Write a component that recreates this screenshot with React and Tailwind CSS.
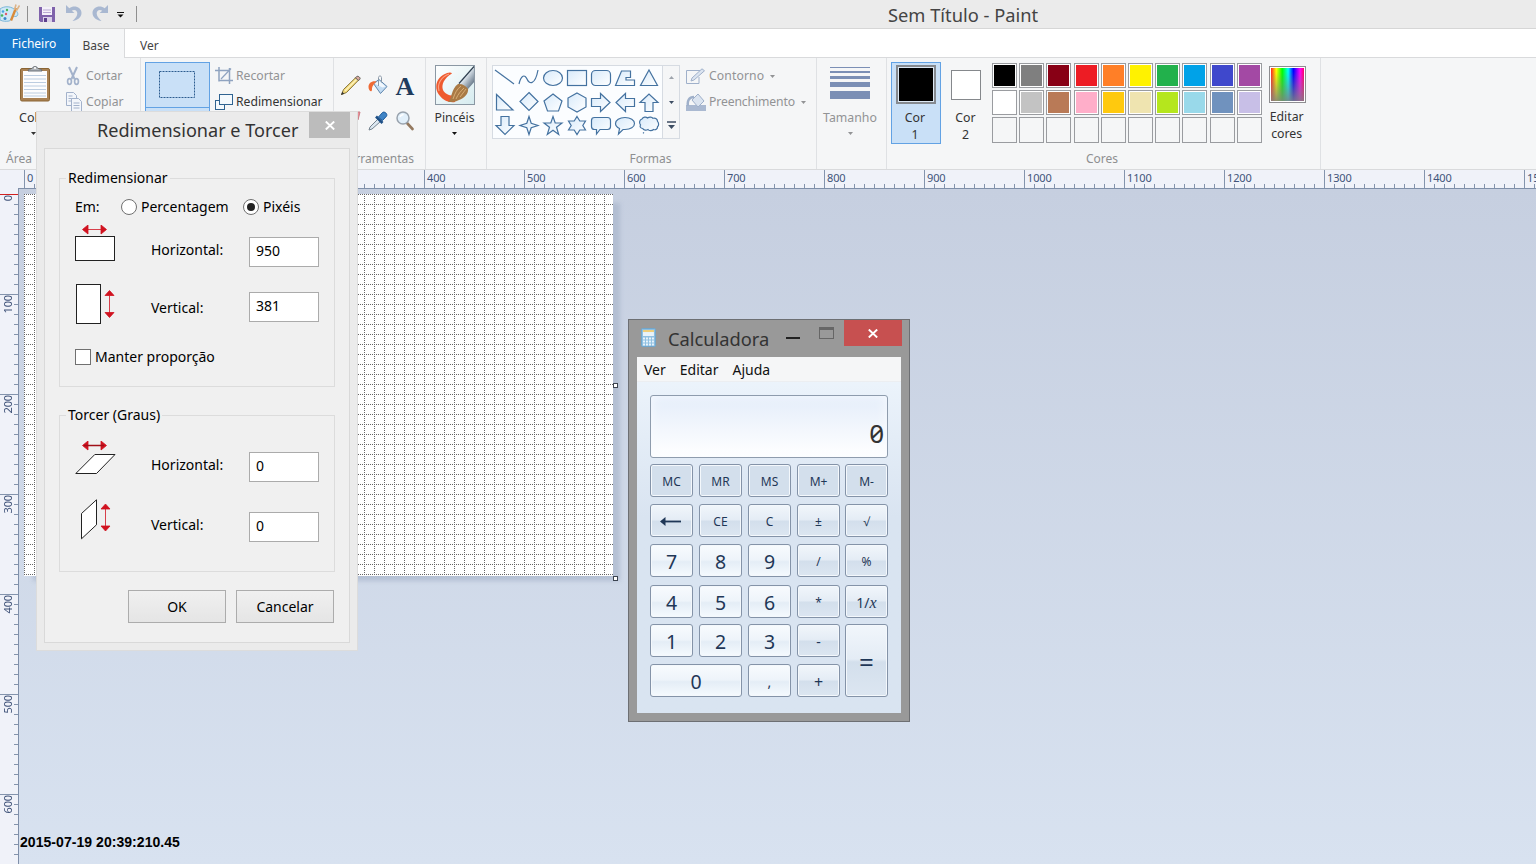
import React from "react";

const range = (n) => Array.from({ length: n }, (_, i) => i);

/* ---------- small icons ---------- */

function PaintLogo() {
  return (
    <svg width="20" height="20" viewBox="0 0 20 20" className="shrink-0">
      <path d="M0 5C4 2 10 2 14 5c3 2 5 5 3 7-1 1-4 0-5 1s0 3-3 4c-3 .5-6 .5-9-1z" fill="#cfe8f6" stroke="#6fb0d6" strokeWidth=".9" />
      <circle cx="3" cy="7.500" r="1.300" fill="#4aa3df" />
      <circle cx="7" cy="6" r="1.200" fill="#49b35a" />
      <circle cx="2" cy="11.500" r="1.300" fill="#49b35a" />
      <circle cx="6" cy="10" r="1.200" fill="#e05a6a" />
      <circle cx="5" cy="14.500" r="1.500" fill="#3b87c8" />
      <path d="M11 16.500 16 4" stroke="#d98b3a" strokeWidth="2.400" />
      <path d="M14.500 6 16 .5M16.500 6.500 19.500 1.500" stroke="#dcb48a" strokeWidth="1.600" />
    </svg>
  );
}

function SaveIcon() {
  return (
    <svg width="16" height="16" viewBox="0 0 16 16">
      <path d="M0 0h16v15H1.500L0 13.500z" fill="#7f62ab" />
      <rect x="3" y="0" width="10" height="8" fill="#f4f1f9" />
      <path d="M4 3h8M4 5.500h8" stroke="#b9a9d3" />
      <rect x="4" y="10" width="9" height="5" fill="#d9d0e8" />
      <rect x="5" y="11" width="3" height="4" fill="#5d3f8c" />
    </svg>
  );
}

function UndoIcon({ flip }) {
  return (
    <svg width="18" height="19" viewBox="0 0 18 19" className={flip ? "-scale-x-100" : ""}>
      <path d="M1 1v8h8.500L6.800 6.800C9.500 5 12.500 6.500 12.300 9.800 12 13 9.500 15 7.500 17c4-.5 9-3 9-8C16.500 3 9 .5 4.300 4.300z" fill="#a9b8d1" />
    </svg>
  );
}

function Caret({ className = "" }) {
  return (
    <svg width="5" height="3" viewBox="0 0 5 3" className={"shrink-0 " + className}>
      <path d="M0 0h5L2.500 3z" fill="currentColor" />
    </svg>
  );
}

function ClipboardIcon() {
  return (
    <svg width="32" height="38" viewBox="0 0 32 38">
      <rect x="1.500" y="3.500" width="29" height="32.500" rx="1.500" fill="#a98153" stroke="#8b6534" />
      <rect x="4" y="6" width="24" height="27" fill="#fdfdfd" />
      <path d="M5 10.500h22M5 14h22M5 17.500h22M5 21h22M5 24.500h22M5 28h22M5 31h22" stroke="#bccde0" strokeWidth="1" />
      <path d="M9 6c0-2.500 3-1.500 4.500-3 1-2 4-2 5 0C20 4.500 23 3.500 23 6z" fill="#aeb3b8" stroke="#5f656c" strokeWidth=".9" />
      <circle cx="16" cy="3" r="1" fill="#fff" />
    </svg>
  );
}

function ScissorsIcon() {
  return (
    <svg width="14" height="20" viewBox="0 0 14 20" fill="none" stroke="#a3b2cb">
      <path d="M3 1 8.500 13M11 1 5.500 13" strokeWidth="2" />
      <ellipse cx="3.500" cy="15.500" rx="1.900" ry="2.800" strokeWidth="1.700" />
      <ellipse cx="10.500" cy="15.500" rx="1.900" ry="2.800" strokeWidth="1.700" />
    </svg>
  );
}

function CopyIcon() {
  return (
    <svg width="17" height="20" viewBox="0 0 17 20" fill="#f3f6fb" stroke="#a3b2cb">
      <path d="M.5.5h7l3 3v10H.5z" />
      <path d="M2.500 4h4M2.500 6.500h5M2.500 9h5" />
      <path d="M5.500 6.500h7l3 3v10h-10z" />
      <path d="M7.500 11h6M7.500 13.500h6M7.500 16h6" />
    </svg>
  );
}

function CropIcon() {
  return (
    <svg width="18" height="18" viewBox="0 0 18 18" fill="none" stroke="#8fa3c0">
      <path d="M4 0v14.500M0 3.500h14.500M14.500 1v16M4 13.500h14" strokeWidth="1.500" />
      <path d="M6 12 16 1.500" strokeWidth="1.200" />
    </svg>
  );
}

function ResizeIcon() {
  return (
    <svg width="18" height="16" viewBox="0 0 18 16" fill="#f4f9fd" stroke="#2f6391">
      <rect x=".5" y="6.500" width="9" height="9" />
      <rect x="4.500" y=".5" width="13" height="10" />
    </svg>
  );
}

function PencilIcon() {
  return (
    <svg width="22" height="22" viewBox="0 0 22 22">
      <path d="M1.500 20.500 3.500 15.500 15.500 3.800 18.200 6.500 6.500 18.500z" fill="#f2d878" stroke="#86743a" />
      <path d="M5 17 17 5" stroke="#fdf3bd" strokeWidth="1.400" />
      <path d="m15.500 3.800 1.200-1.300c1.500-1 4.500 1.500 3 3l-1.500 1z" fill="#d9a9a0" stroke="#5f5a52" />
      <path d="M1 21 2.300 17.800 4.200 19.700z" fill="#333" />
    </svg>
  );
}

function BucketIcon() {
  return (
    <svg width="20" height="20" viewBox="0 0 20 20">
      <path d="m5.500 8.500 5.500-4 8 7-6.500 7z" fill="#c3dcf3" stroke="#5f86ad" />
      <path d="m7 8.700 4-3 6.500 5.800-3 1z" fill="#f2f8fd" />
      <path d="M10.500 11V2.500c0-2 3-2 3 0v5" fill="none" stroke="#8a99a8" />
      <path d="M8.500 6.500C4 5.500.5 8 .5 12c0 4 3.500 6 3.500 2.500C4 11.500 5 10 8.500 6.500z" fill="#ee6a35" />
    </svg>
  );
}

function PickerIcon() {
  return (
    <svg width="20" height="20" viewBox="0 0 20 20">
      <path d="m1 19 1-3L10 8l2.500 2.500L4 18z" fill="#dce7f0" stroke="#75838f" />
      <path d="M8 5.500 14.500 12" stroke="#1d4f86" strokeWidth="2.600" />
      <path d="m10.500 6 4-4.500C16.500 0 20 3 18.500 5.200L14.500 9.500z" fill="#3f84c6" stroke="#1d5a9a" />
    </svg>
  );
}

function MagnifierIcon() {
  return (
    <svg width="18" height="20" viewBox="0 0 18 20">
      <path d="m11 12 5.500 6" stroke="#94795f" strokeWidth="2.600" strokeLinecap="round" />
      <circle cx="7" cy="7" r="6" fill="#e2f0fb" stroke="#99a3ae" strokeWidth="1.500" />
      <path d="M4 6c.5-1.500 2-2.500 3.500-2.300" stroke="#fff" strokeWidth="1.500" fill="none" />
    </svg>
  );
}

function BrushIcon() {
  return (
    <svg width="40" height="40" viewBox="0 0 40 40">
      <defs>
        <linearGradient id="ferrule" x1="0" y1="0" x2="1" y2="1">
          <stop offset="0" stopColor="#55697f" />
          <stop offset=".4" stopColor="#e6eef5" />
          <stop offset="1" stopColor="#33475c" />
        </linearGradient>
        <linearGradient id="paper" x1="0" y1="0" x2="1" y2="1">
          <stop offset="0" stopColor="#ffffff" />
          <stop offset="1" stopColor="#d5ebef" />
        </linearGradient>
      </defs>
      <rect width="40" height="40" fill="url(#paper)" />
      <path d="M17 8.500C15.500 6 7 9 3 15 0 20 1 27 5 31c3 4 9 7 15 6l2-7c-6 2-12-1-14-5-2-5 1-12 9-16.500z" fill="#ee5a2e" />
      <path d="M14 9C6 12 2 19 4 26" fill="none" stroke="#f9a184" strokeWidth="1.200" />
      <path d="M13 37c4-3 3-13 10-18l5-1 5 5c1 6-4 10-9 12-4 2-7 2-11 2z" fill="#a97a45" />
      <path d="M18 34c2-6 4-10 8-13M21 34c2-5 5-8 8-11M25 32c2-3 4-5 6-8" stroke="#dcb37c" strokeWidth=".9" fill="none" />
      <path d="M24 19 40 2v14l-7 8c-2-3-5-5-9-5z" fill="url(#ferrule)" />
      <path d="M24 18.500 39 1.500" stroke="#2e3d4e" strokeWidth="1.200" />
      <rect x=".5" y=".5" width="39" height="39" fill="none" stroke="#8b98a4" />
    </svg>
  );
}

const SHAPES = [
  <path key="s" d="M2 4 21 18" />,
  <path key="s" d="M2 18C4 9 8 8 10 13s8 7 11-9" fill="none" />,
  <ellipse key="s" cx="12" cy="12" rx="9.500" ry="7.500" />,
  <rect key="s" x="2.500" y="4.500" width="19" height="15" />,
  <rect key="s" x="2.500" y="4.500" width="19" height="15" rx="4" />,
  <path key="s" d="M2.500 19.500 8.500 5H17.500v6.500h-4.500v2.500H21.500v5.500z" />,
  <path key="s" d="M12 4 20.500 19.500h-17z" />,
  <path key="s" d="M3.500 4.500v15.500h16.500z" />,
  <path key="s" d="M12 2.500 21 11.500 12 20.500 3 11.500z" />,
  <path key="s" d="M12 4 21 11 17.500 21h-11L3 11z" />,
  <path key="s" d="M12 3 21 8v9l-9 5-9-5V8z" />,
  <path key="s" d="M2.500 8.500h9v-5l9.500 9-9.500 9v-5h-9z" />,
  <path key="s" d="M21.500 8.500h-9v-5L3 12.500l9.500 9v-5h9z" />,
  <path key="s" d="M8 21.500v-9H3L12 4l9 8.500h-5v9z" />,
  <path key="s" d="M8 2.500v9H3l9 9 9-9h-5v-9z" />,
  <path key="s" d="M12 2.500 14.200 9.300 21 11.500 14.200 13.700 12 20.500 9.800 13.700 3 11.500 9.800 9.300z" />,
  <path key="s" d="M12 2.500 14.200 9H21l-5.500 4.300 2.200 7.200-5.700-4.300L6.300 20.500l2.200-7.200L3 9h6.800z" />,
  <path key="s" d="M12 2.500 14.800 7H20.500L17.800 11.500l2.700 4.500h-5.700L12 20.500 9.200 16H3.500L6.200 11.500 3.500 7h5.700z" />,
  <path key="s" d="M5.500 3.500h13q3 0 3 3v6q0 3-3 3H11l-3.500 4.500v-4.500h-2q-3 0-3-3v-6q0-3 3-3z" />,
  <path key="s" d="M12 3.500c5.500 0 9.500 2.500 9.500 6s-4 6-9.500 6c-1 0-1.500 0-2 0l-4.500 4.500 1-5.500C4 13.300 2.500 11.500 2.500 9.500c0-3.500 4-6 9.500-6z" />,
  <path key="s" d="M5 5c1-2 4-2.500 5.500-1 2-1.500 4.500-1 5.500.3 2.500-.8 4.500.8 4.500 3 1.500 1.500 1.500 4.200 0 5.500.2 2-2 3.500-4 2.700-1.500 1.500-4.500 1.500-5.500 0-1.500 1-4.500 1-5.300-1C3.500 14.500 2.500 12.500 3.500 11 1.800 9 2.500 5.500 5 5zM6 18.500l1 .8" />,
];

/* ---------- ribbon ---------- */

function GroupLabel({ children, className = "" }) {
  return <div className={"mt-[2px] whitespace-nowrap text-center text-[12px] leading-[16px] text-[#8e8f91] " + className}>{children}</div>;
}

function TitleBar() {
  return (
    <header className="flex h-[29px] shrink-0 border-b border-[#d6d6d6] bg-[#ebebeb]">
      <div className="flex w-[390px] items-start pt-[4px]">
        <PaintLogo />
        <span className="ml-[7px] mt-[2px] h-[16px] w-px bg-[#8f8f8f]" />
        <span className="ml-[11px] mt-[3px]"><SaveIcon /></span>
        <span className="ml-[10px]"><UndoIcon /></span>
        <span className="ml-[8px]"><UndoIcon flip /></span>
        <svg width="7" height="6" viewBox="0 0 7 6" className="ml-[8px] mt-[8px]">
          <path d="M0 .5h7" stroke="#111" />
          <path d="M.5 2.500h6l-3 3z" fill="#111" />
        </svg>
        <span className="ml-[12px] mt-[2px] h-[16px] w-px bg-[#8f8f8f]" />
      </div>
      <h1 className="w-[1146px] pl-[498px] pt-[4px] text-[18.300px] leading-[22px] text-[#444]">Sem Título - Paint</h1>
    </header>
  );
}

function Tabs() {
  return (
    <nav className="flex h-[29px] shrink-0 bg-white text-[12px] leading-[16px] text-[#444]">
      <div className="w-[70px] bg-[#1979ca] pr-[2px] pt-[7px] text-center text-white">Ficheiro</div>
      <div className="w-[55px] border-r border-[#d9dadc] bg-[#f5f6f7] pr-[2px] pt-[9px] text-center">Base</div>
      <div className="flex-1 border-b border-[#d9dadc] pl-[15px] pt-[9px]">Ver</div>
    </nav>
  );
}

function RibbonRow({ icon, children, muted, className = "w-[22px]" }) {
  return (
    <div className={"flex h-[26px] items-center whitespace-nowrap text-[12.200px] " + (muted ? "text-[#929395]" : "text-[#333]")}>
      <span className={"flex shrink-0 items-center " + className}>{icon}</span>
      {children}
    </div>
  );
}

const SWATCHES = [
  "bg-black", "bg-[#7f7f7f]", "bg-[#880015]", "bg-[#ed1c24]", "bg-[#ff7f27]", "bg-[#fff200]", "bg-[#22b14c]", "bg-[#00a2e8]", "bg-[#3f48cc]", "bg-[#a349a4]",
  "bg-white", "bg-[#c3c3c3]", "bg-[#b97a57]", "bg-[#ffaec9]", "bg-[#ffc90e]", "bg-[#efe4b0]", "bg-[#b5e61d]", "bg-[#99d9ea]", "bg-[#7092be]", "bg-[#c8bfe7]",
];

function Ribbon() {
  const divider = "shrink-0 border-r border-[#dfe1e4]";
  return (
    <section className="flex h-[112px] shrink-0 border-b border-[#d9dadc] bg-[#f5f6f7] text-[#333]">
      <div className={"flex w-[141px] flex-col " + divider}>
        <div className="flex h-[91px]">
          <div className="w-[66px] pl-[19px] pt-[7px]">
            <ClipboardIcon />
            <div className="pt-[6px] text-[12.500px] leading-[17px]">Colar</div>
            <Caret className="ml-[12px] mt-[6px]" />
          </div>
          <div className="pt-[5px]">
            <RibbonRow muted className="w-[20px]" icon={<ScissorsIcon />}>Cortar</RibbonRow>
            <RibbonRow muted className="w-[20px]" icon={<CopyIcon />}>Copiar</RibbonRow>
          </div>
        </div>
        <GroupLabel className="self-start pl-[6px]">Área</GroupLabel>
      </div>

      <div className={"flex w-[193px] pt-[4px] " + divider}>
        <div className="ml-[4px] h-[80px] w-[65px] border border-[#62a2e4] bg-[#c9e0f7]">
          <div className="flex h-[45px] items-center justify-center border-b border-[#62a2e4]">
            <svg width="36" height="27" viewBox="0 0 36 27" className="-mt-[2px] ml-[-2px]">
              <rect x=".5" y=".5" width="35" height="26" fill="none" stroke="#2c5c8f" strokeDasharray="2 1" />
            </svg>
          </div>
        </div>
        <div className="pl-[5px] pt-px">
          <RibbonRow muted className="w-[21px]" icon={<CropIcon />}>Recortar</RibbonRow>
          <RibbonRow className="w-[21px]" icon={<ResizeIcon />}>Redimensionar</RibbonRow>
        </div>
      </div>

      <div className={"flex w-[92px] flex-col " + divider}>
        <div className="grid h-[91px] grid-cols-[26px_28px_26px] grid-rows-[36px_36px] place-items-center pl-[4px] pt-[9px]">
          <PencilIcon />
          <BucketIcon />
          <span className="pt-[2px] font-['Liberation_Serif',serif] text-[26px] font-bold leading-[27px] text-[#1f3c5d]">A</span>
          <svg width="20" height="18" viewBox="0 0 20 18" className="-mt-[4px]">
            <path d="m2 10 9-8h8l-2 8-8 7H2z" fill="#ee8f98" stroke="#c87c84" />
          </svg>
          <PickerIcon />
          <MagnifierIcon />
        </div>
        <GroupLabel className="self-end pr-[11px]">Ferramentas</GroupLabel>
      </div>

      <div className={"flex w-[61px] flex-col items-center pt-[7px] " + divider}>
        <div className="-ml-[2px]"><BrushIcon /></div>
        <div className="-ml-[3px] pt-[4px] text-[12.300px] leading-[17px]">Pincéis</div>
        <Caret className="-ml-[3px] mt-[6px] text-[#111]" />
      </div>

      <div className={"flex w-[330px] flex-col " + divider}>
        <div className="flex h-[91px] pl-[5px] pt-[7px]">
          <div className="flex h-[74px] border border-[#d6dbe2] bg-[#fbfdff]">
            <svg width="0" height="0" className="absolute">
              <linearGradient id="shape-fill" x1="0" y1="0" x2="1" y2="1">
                <stop offset="0" stopColor="#d8eafa" />
                <stop offset="1" stopColor="#ffffff" />
              </linearGradient>
            </svg>
            <div className="grid h-[72px] grid-cols-[repeat(7,24px)] grid-rows-[repeat(3,24px)]">
              {SHAPES.map((s, i) => (
                <svg key={i} width="24" height="24" viewBox="0 0 24 24" fill="url(#shape-fill)" stroke="#4472a0" strokeWidth="1.200">{s}</svg>
              ))}
            </div>
            <div className="ml-[1px] flex w-[17px] flex-col items-center border-l border-[#d6dbe2] bg-[#f5f6f7] text-[#3d4d63]">
              <Caret className="mt-[10px] rotate-180 text-[#9ea4ac]" />
              <Caret className="mt-[22px]" />
              <svg width="9" height="9" viewBox="0 0 9 9" className="mt-[17px]">
                <path d="M0 1h9" stroke="currentColor" strokeWidth="1.500" />
                <path d="M1 4h7L4.500 8z" fill="currentColor" />
              </svg>
            </div>
          </div>
          <div className="-mt-[2px] pl-[6px]">
            <RibbonRow
              muted
              className="w-[23px]"
              icon={
                <svg width="20" height="17" viewBox="0 0 20 17" fill="none" stroke="#9fb0ca">
                  <path d="M14 2.500H.5v13H13V9" />
                  <path d="M5 13 6 10 16 .8l2.500 2L8 12z" fill="#dbe4f0" />
                </svg>
              }
            >
              <span className="tracking-[0.100px]">Contorno</span>
              <Caret className="ml-[6px]" />
            </RibbonRow>
            <RibbonRow
              muted
              className="w-[23px]"
              icon={
                <svg width="20" height="20" viewBox="0 0 20 20">
                  <rect y="13" width="20" height="6" fill="#aab9d1" />
                  <path d="m6 8 6-6 6 7-6 6z" fill="#dbe4f0" stroke="#9fb0ca" />
                  <path d="M8 5C3 5 1 9 2 14" fill="none" stroke="#9fb0ca" strokeWidth="2.500" />
                </svg>
              }
            >
              <span className="tracking-[-0.120px]">Preenchimento</span>
              <Caret className="ml-[6px]" />
            </RibbonRow>
          </div>
        </div>
        <GroupLabel className="pr-[2px]">Formas</GroupLabel>
      </div>

      <div className={"flex w-[70px] flex-col items-center pt-[9px] text-[#929395] " + divider}>
        <svg width="40" height="33" viewBox="0 0 40 33" fill="#7b8fb5" className="-ml-[3px]">
          <rect width="40" height="1" />
          <rect y="4" width="40" height="2" />
          <rect y="9" width="40" height="3" />
          <rect y="15" width="40" height="5" />
          <rect y="24" width="40" height="8" />
        </svg>
        <div className="-ml-[3px] pt-[9px] text-[12.300px] leading-[17px]">Tamanho</div>
        <Caret className="-ml-[2px] mt-[6px]" />
      </div>

      <div className={"flex w-[434px] flex-col " + divider}>
        <div className="flex h-[91px] pl-[4px] pt-[4px] text-center text-[12.300px] leading-[17px]">
          <div className="flex h-[82px] w-[50px] flex-col items-center border border-[#62a2e4] bg-[#c9e0f7] pt-[2px]">
            <div className="h-[40px] w-[40px] border-2 border-[#858a90] bg-black p-0 outline-1 -outline-offset-3 outline-[#dce8f4]" />
            <div className="mt-[5px] pr-[2px]">Cor<br />1</div>
          </div>
          <div className="ml-[10px] flex w-[30px] flex-col items-center pt-[8px]">
            <div className="h-[30px] w-[30px] border border-[#85888c] bg-white" />
            <div className="mt-[9px] pr-[1px]">Cor<br />2</div>
          </div>
          <div className="ml-[11px] mt-[1px] grid grid-cols-[repeat(10,25px)] grid-rows-[25px_25px_26px] gap-x-[2.200px] gap-y-[2px]">
            {range(30).map((i) => (
              <div key={i} className="border border-[#9a9ca0] p-px">
                <div className={"h-full " + (SWATCHES[i] ? "outline-1 outline-white " + SWATCHES[i] : "")} />
              </div>
            ))}
          </div>
          <div className="ml-[7px] flex flex-col items-center pt-[4px]">
            <div className="h-[37px] w-[37px] border border-[#8d8d90] bg-white p-px">
              <div className="h-full bg-[linear-gradient(90deg,#f22,#ff0_16%,#0f0_34%,#0ff_52%,#00f_68%,#f0f_88%,#f06)]">
                <div className="h-full bg-[linear-gradient(180deg,transparent_10%,#808080dd)]" />
              </div>
            </div>
            <div className="mt-[5px] pr-[1px]">Editar<br />cores</div>
          </div>
        </div>
        <GroupLabel className="pr-[3px]">Cores</GroupLabel>
      </div>
    </section>
  );
}

/* ---------- rulers ---------- */

function HorizontalRuler() {
  return (
    <div className="flex h-[19px] shrink-0 overflow-hidden bg-[#f0f2f9]">
      <div className="w-[24px] shrink-0 pl-[18px]">
        <div className="h-[19px] border-b border-[#7f8fa9]" />
      </div>
      {range(16).map((m) => (
        <div key={m} className="flex h-[19px] w-[100px] shrink-0 items-end border-b border-[#7f8fa9]">
          {range(10).map((t) => (
            <div key={t} className={"w-[10px] border-l border-[#8494ad] " + (t === 0 ? "h-[18px]" : "h-[4px]")}>
              {t === 0 && <span className="block whitespace-nowrap pl-[2px] pt-[1px] text-[11px] leading-[14px] tracking-[-0.150px] text-[#41547a]">{m * 100}</span>}
            </div>
          ))}
        </div>
      ))}
    </div>
  );
}

function VerticalRuler() {
  return (
    <div className="flex w-[19px] shrink-0 flex-col overflow-hidden border-r border-[#7f8fa9] bg-[#f0f2f9] pt-[5px]">
      {range(7).map((m) => (
        <div key={m} className="flex h-[100px] shrink-0 flex-col items-end">
          {range(10).map((t) => (
            <div
              key={t}
              className={"h-[10px] shrink-0 border-t " + (t === 0 ? "w-full " : "w-[4px] ") + (m === 0 && t === 0 ? "border-[#d02020]" : "border-[#8494ad]")}
            >
              {t === 0 && (
                <span className="block w-[15px] rotate-180 text-[11px] leading-[15px] tracking-[-0.150px] text-[#41547a] [writing-mode:vertical-rl]">{m * 100}</span>
              )}
            </div>
          ))}
        </div>
      ))}
    </div>
  );
}

function Handle({ className }) {
  return <span className={"absolute h-[5px] w-[5px] border border-[#3c4450] bg-white " + className} />;
}

function Workspace() {
  return (
    <main className="flex-1 bg-linear-to-b from-[#c6cfe0] to-[#d8e2f0] pl-[5px] pt-[5px]">
      <div className="relative h-[382px] w-[589px]">
        <div className="absolute -bottom-[5px] -right-[7px] left-[9px] top-[9px] bg-[#a9b6cc]/70 blur-[2px]" />
        <svg width="589" height="382" className="relative block" shapeRendering="crispEdges">
          <pattern id="grid" width="10" height="10" patternUnits="userSpaceOnUse">
            <rect width="10" height="10" fill="#fff" />
            <path d="M0 .5h1M2 .5h1M4 .5h1M6 .5h1M8 .5h1M0 2.500h1M0 4.500h1M0 6.500h1M0 8.500h1" stroke="#666" />
          </pattern>
          <rect width="589" height="382" fill="url(#grid)" />
        </svg>
        <Handle className="-right-[5px] top-[189px]" />
        <Handle className="-bottom-[5px] -right-[5px]" />
        <div className="absolute left-[-4px] top-[640px] whitespace-nowrap font-['Liberation_Sans',sans-serif] text-[14px] font-bold leading-[16px] tracking-[0.050px] text-black">2015-07-19 20:39:210.45</div>
      </div>
    </main>
  );
}

/* ---------- resize dialog ---------- */

const RED = "#d0121f";

function HArrow() {
  return <path d="M8 4.500h22M13 0v9L7.500 4.500zM26 0v9l5.500-4.500z" fill={RED} stroke={RED} strokeWidth=".8" />;
}

function VArrow() {
  return <path d="M4.500 5v20M0 5h9L4.500 0zM0 22h9l-4.500 5z" fill={RED} stroke={RED} strokeWidth=".8" />;
}

function Field({ icon, label, value, className, inputClass }) {
  return (
    <div className={"flex h-[40px] items-center " + className}>
      <div className="flex w-[76px] shrink-0">{icon}</div>
      <div className="w-[98px] shrink-0">{label}</div>
      <div className={"h-[30px] w-[70px] border border-[#ababab] bg-white pl-[6px] text-[14px] leading-[26px] " + inputClass}>{value}</div>
    </div>
  );
}

function ResizeDialog() {
  return (
    <section className="absolute left-[36px] top-[111px] flex h-[540px] w-[322px] flex-col border border-[#dcdcdc] bg-[#ebebeb] pb-[7px] pl-[7px] pr-[7px] text-[14px] leading-[18px] text-black">
      <div className="flex h-[36px] shrink-0 justify-end">
        <h2 className="w-[212px] whitespace-nowrap pt-[5px] text-[18.100px] leading-[26px] text-[#333]">Redimensionar e Torcer</h2>
        <div className="flex h-[26px] w-[41px] items-center justify-center bg-[#bcbcbc]">
          <svg width="10" height="9" viewBox="0 0 10 9"><path d="m.8.500 8.400 8M9.200.500l-8.400 8" stroke="#fff" strokeWidth="1.900" /></svg>
        </div>
      </div>
      <div className="flex-1 border border-[#d9d9d9] bg-[#f0f0f0] px-[14px] pt-[20px]">
        <fieldset className="h-[218px] border border-[#dcdcdc] pl-[15px]">
          <legend className="-ml-[9px] px-[2px]">Redimensionar</legend>
          <div className="mt-[11px] flex h-[18px] items-center">
            <span className="w-[46px]">Em:</span>
            <span className="h-[16px] w-[16px] rounded-full border border-[#707070] bg-white" />
            <span className="ml-[4px] w-[102px]">Percentagem</span>
            <span className="flex h-[16px] w-[16px] items-center justify-center rounded-full border border-[#707070] bg-white">
              <span className="h-[8px] w-[8px] rounded-full bg-[#222]" />
            </span>
            <span className="ml-[4px]">Pixéis</span>
          </div>
          <Field
            className="mt-[14px]"
            inputClass="translate-y-[2px]"
            label="Horizontal:"
            value="950"
            icon={
              <svg width="41" height="38" viewBox="0 0 41 38" className="-translate-y-[6px]">
                <HArrow />
                <rect x=".5" y="11.500" width="39" height="24" fill="#fff" stroke="#222" />
              </svg>
            }
          />
          <Field
            className="mt-[18px]"
            inputClass="-translate-y-px"
            label="Vertical:"
            value="381"
            icon={
              <svg width="41" height="41" viewBox="0 0 41 41" className="-translate-y-[4px]">
                <rect x="1.500" y=".5" width="24" height="39" fill="#fff" stroke="#222" />
                <g transform="translate(30 6.500)"><VArrow /></g>
              </svg>
            }
          />
          <div className="mt-[20px] flex items-center">
            <span className="h-[16px] w-[16px] border border-[#707070] bg-white" />
            <span className="ml-[4px]">Manter proporção</span>
          </div>
        </fieldset>
        <fieldset className="mt-[19px] h-[166px] border border-[#dcdcdc] pl-[15px]">
          <legend className="-ml-[9px] px-[2px]">Torcer (Graus)</legend>
          <Field
            className="mt-[21px]"
            inputClass="translate-y-[2px]"
            label="Horizontal:"
            value="0"
            icon={
              <svg width="41" height="34" viewBox="0 0 41 34" className="-mt-[15px]">
                <HArrow />
                <path d="M9 4.500h20" stroke="#a01018" strokeWidth="1.500" />
                <path d="m.8 32.500 19-19H40L21.500 32.500z" fill="#fff" stroke="#222" />
              </svg>
            }
          />
          <Field
            className="mt-[20px]"
            inputClass="translate-y-[2px]"
            label="Vertical:"
            value="0"
            icon={
              <svg width="41" height="41" viewBox="0 0 41 41" className="-mt-[12px]">
                <path d="M6.500 14.500 21.500.8v25l-15 14z" fill="#fff" stroke="#222" />
                <g transform="translate(26 5)"><VArrow /></g>
              </svg>
            }
          />
        </fieldset>
        <div className="mt-[18px] flex justify-end gap-[10px] pr-[1px] text-center">
          <div className="h-[33px] w-[98px] border border-[#acacac] bg-linear-to-b from-[#f0f0f0] to-[#e5e5e5] pt-[7px]">OK</div>
          <div className="h-[33px] w-[98px] border border-[#acacac] bg-linear-to-b from-[#f0f0f0] to-[#e5e5e5] pt-[7px]">Cancelar</div>
        </div>
      </div>
    </section>
  );
}

/* ---------- calculator ---------- */

const MEM = "bg-[#d3dfec]";
const OP = "bg-[linear-gradient(180deg,#f1f6fb_0%,#e4ecf5_48%,#d3dfec_52%,#dce6f1_100%)]";
const NUM = "bg-[linear-gradient(180deg,#f8fbfe_0%,#eef4fa_48%,#e4edf6_54%,#f5fafe_100%)]";
const SM = " text-[12px]";
const LG = " text-[19.500px]";
const LAST = " -ml-px mr-px";

const KEYS = [
  ["MC", MEM + SM], ["MR", MEM + SM], ["MS", MEM + SM], ["M+", MEM + SM], ["M-", MEM + SM + LAST],
  ["back", OP + SM], ["CE", OP + SM], ["C", OP + SM], ["±", OP + SM], ["√", OP + SM + LAST],
  ["7", NUM + LG], ["8", NUM + LG], ["9", NUM + LG], ["/", OP + SM], ["%", OP + SM + LAST],
  ["4", NUM + LG + " translate-y-px"], ["5", NUM + LG + " translate-y-px"], ["6", NUM + LG + " translate-y-px"], ["*", OP + SM + " translate-y-px"], ["1/x", OP + " text-[14px] translate-y-px" + LAST],
  ["1", NUM + LG], ["2", NUM + LG], ["3", NUM + LG], ["-", OP + " text-[14px]"], ["=", OP + " row-span-2 text-[26px]" + LAST],
  ["0", NUM + LG + " col-span-2"], [",", NUM + " text-[14px]"], ["+", OP + " text-[16px]"],
];

function keyFace(k) {
  if (k === "back")
    return (
      <svg width="21" height="9" viewBox="0 0 21 9" className="-ml-[3px]">
        <path d="M4 4.500h17" stroke="#1f3757" strokeWidth="1.800" />
        <path d="M0 4.500 5.500 0v9z" fill="#1f3757" />
      </svg>
    );
  if (k === "1/x")
    return (
      <span>1/<i className="font-['Liberation_Serif',serif] text-[16px]">x</i></span>
    );
  return k;
}

function Calculator() {
  return (
    <section className="absolute left-[628px] top-[319px] flex h-[403px] w-[282px] flex-col border border-[#6d6f73] bg-[#999999] pb-[8px] pl-[8px] pr-[7px]">
      <div className="flex h-[37px] shrink-0">
        <svg width="16" height="20" viewBox="0 0 16 20" className="ml-[4px] mt-[8px]">
          <rect x=".5" y=".5" width="14" height="18" rx="1" fill="#8fc0e2" stroke="#6fa6cd" />
          <rect x="2" y="2" width="11" height="2" fill="#f0cf7a" />
          <rect x="2" y="4" width="11" height="4" fill="#e8f3fa" />
          <path d="M2 10.500h11M2 13.500h11M2 16.500h11" stroke="#e9f4fb" strokeWidth="2" strokeDasharray="2 1" />
        </svg>
        <h2 className="ml-[11px] w-[117px] pt-[6px] text-[18.300px] leading-[26px] text-[#333]">Calculadora</h2>
        <span className="ml-[2px] mt-[17px] h-[2px] w-[14px] bg-[#222]" />
        <span className="ml-[19px] mt-[7px] h-[12px] w-[15px] border border-t-[3px] border-[#666]" />
        <div className="ml-[10px] flex h-[26px] w-[58px] items-center justify-center bg-[#c75050]">
          <svg width="10" height="9" viewBox="0 0 10 9"><path d="m.8.500 8.400 8M9.200.500l-8.400 8" stroke="#fff" strokeWidth="1.900" /></svg>
        </div>
      </div>
      <div className="mr-px flex-1 bg-linear-to-b from-[#eff6fd] to-[#d9e4f1] to-45%">
        <div className="flex h-[25px] gap-[14px] border-b border-[#eceef1] bg-[#f5f6f7] pl-[7px] pt-[4px] text-[14px] leading-[18px] text-[#111]">
          <span>Ver</span>
          <span>Editar</span>
          <span>Ajuda</span>
        </div>
        <div className="px-[13px] pt-[13px]">
          <div className="h-[63px] w-[238px] rounded-[3px] border border-[#8e9cad] bg-linear-to-b from-[#e4edfa] to-white pr-[3px] pt-[22px] text-right font-['Noto_Sans',sans-serif] text-[26px] leading-[30px] slashed-zero text-[#333] shadow-[inset_0_0_12px_#f8fbff]">0</div>
          <div className="mt-[6px] grid grid-cols-[repeat(5,43px)] grid-rows-[repeat(6,33px)] gap-x-[6px] gap-y-[7px]">
            {KEYS.map(([k, cls]) => (
              <div key={k} className={"flex items-center justify-center rounded-[3px] border border-[#8493a8] pt-[2px] leading-none text-[#1f3757] shadow-[inset_0_0_0_1px_#f4f8fc] " + cls}>
                {keyFace(k)}
              </div>
            ))}
          </div>
        </div>
      </div>
    </section>
  );
}

export default function App() {
  return (
    <div className="relative flex h-[864px] w-[1536px] flex-col overflow-hidden bg-[#d0d9e8] font-['Noto_Sans','Open_Sans',sans-serif]">
      <TitleBar />
      <Tabs />
      <Ribbon />
      <HorizontalRuler />
      <div className="flex min-h-0 flex-1">
        <VerticalRuler />
        <Workspace />
      </div>
      <ResizeDialog />
      <Calculator />
    </div>
  );
}
